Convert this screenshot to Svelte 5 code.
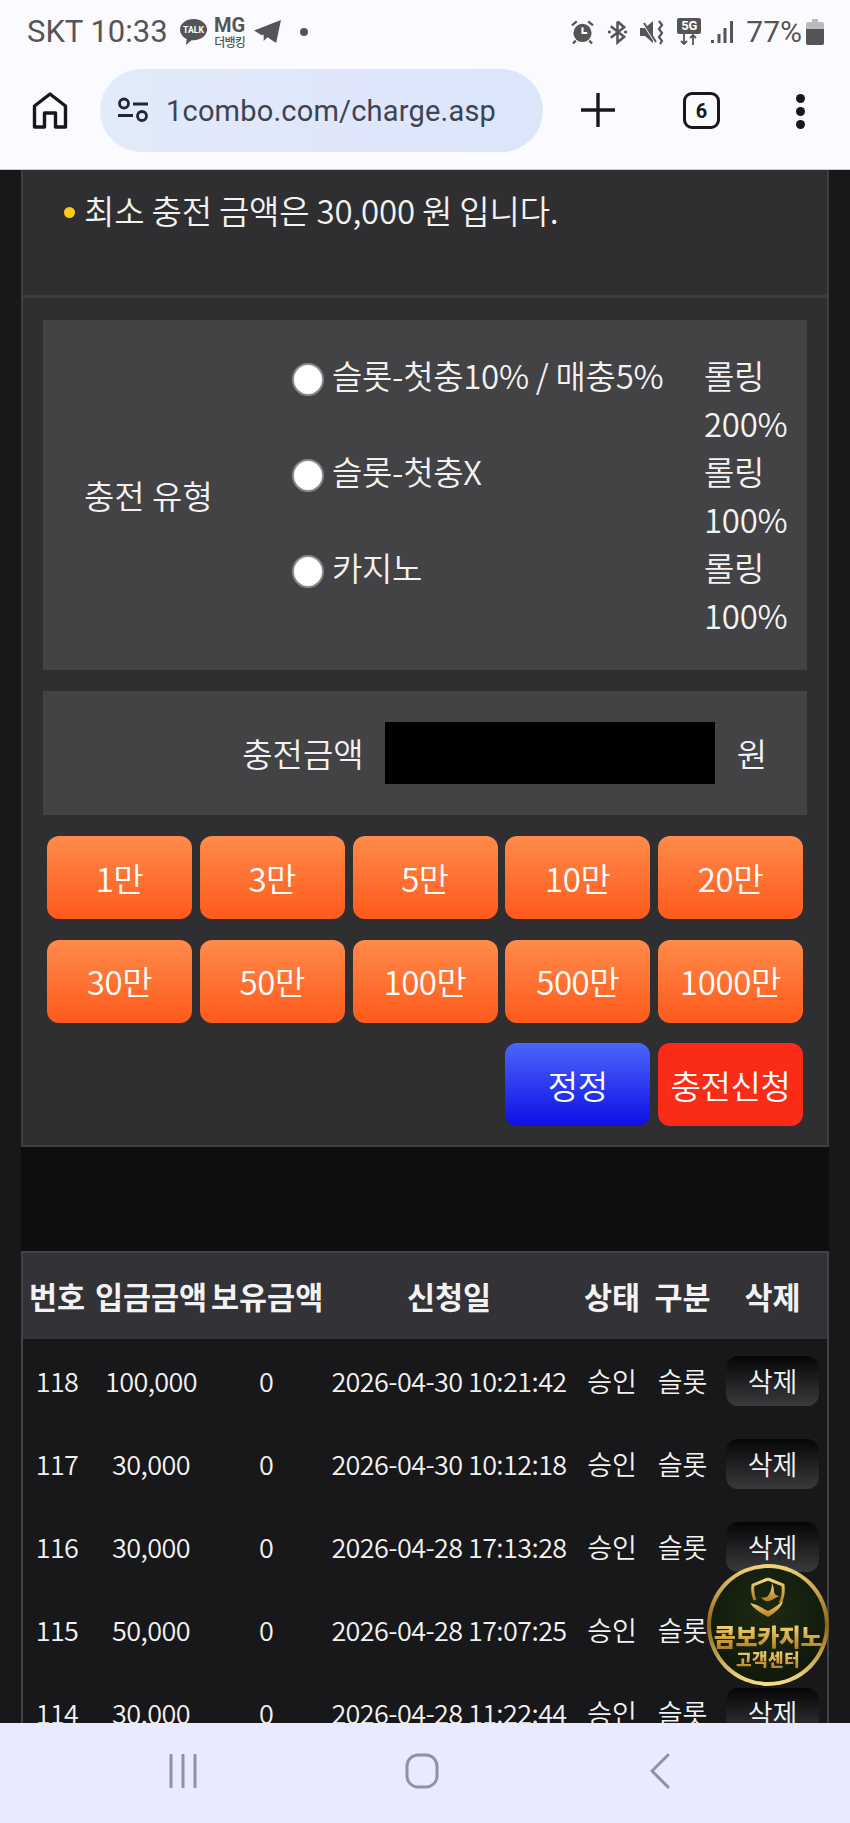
<script>
  const row1 = ['1만', '3만', '5만', '10만', '20만'];
  const row2 = ['30만', '50만', '100만', '500만', '1000만'];
  const types = [
    ['슬롯-첫충10% / 매충5%', '200%'],
    ['슬롯-첫충X', '100%'],
    ['카지노', '100%']
  ];
  const rows = [
    ['118', '100,000', '2026-04-30 10:21:42'],
    ['117', '30,000', '2026-04-30 10:12:18'],
    ['116', '30,000', '2026-04-28 17:13:28'],
    ['115', '50,000', '2026-04-28 17:07:25'],
    ['114', '30,000', '2026-04-28 11:22:44']
  ];
</script>

<div class="screen">
  <header class="status">
    <span class="st-time">SKT 10:33</span>
    <svg class="ic-talk" viewBox="0 0 30 30"><path d="M15 2C7 2 1 7 1 13c0 4 3 8 7 10l-1 6 6-5h2c8 0 14-5 14-11S23 2 15 2z" fill="#555"/><text x="15" y="17" text-anchor="middle" class="talk-t">TALK</text></svg>
    <span class="mg"><b>MG</b><small>더뱅킹</small></span>
    <svg class="ic-tg" viewBox="0 0 30 26"><path d="M1 12 29 1l-5 24-9-6-4 4v-7l-2 1z" fill="#555"/></svg>
    <span class="dot"></span>
    <span class="st-grow"></span>
    <svg class="ic-alarm" viewBox="0 0 24 26"><circle cx="12" cy="14" r="9.500" fill="#555"/><path d="M12 8v6h5" stroke="#fff" stroke-width="2.200" fill="none"/><path d="M1 6l5-4M23 6l-5-4M5 22l-3 3M19 22l3 3" stroke="#555" stroke-width="2.400"/></svg>
    <svg class="ic-bt" viewBox="0 0 22 26"><path d="M11 2v22l7-6L4 7M11 2l7 6L4 19M1 13h3M18 13h3" stroke="#555" stroke-width="2.600" fill="none"/></svg>
    <svg class="ic-mute" viewBox="0 0 24 26"><path d="M0 9h5l8-7v22l-8-7H0z" fill="#555"/><path d="M2 2l14 22" stroke="#fbfaff" stroke-width="2.400"/><path d="M4 4l12 19" stroke="#555" stroke-width="2"/><path d="M19 2l3 4-3 4 3 4-3 4 3 4-2 3" stroke="#555" stroke-width="2.200" fill="none"/></svg>
    <span class="five"><b>5G</b><svg viewBox="0 0 22 11"><path d="M6 0v10M3 7l3 3 3-3M15 11V1M12 4l3-3 3 3" stroke="#555" stroke-width="1.800" fill="none"/></svg></span>
    <svg class="ic-sig" viewBox="0 0 22 24"><path d="M0 20h3v3H0zM6.500 14h3v9h-3zM12.500 8h3v15h-3zM19 1h3v22h-3z" fill="#555"/></svg>
    <span class="pct">77%</span>
    <svg class="ic-bat" viewBox="0 0 18 26"><path d="M6 0h6v3h4a2 2 0 0 1 2 2v19a2 2 0 0 1-2 2H2a2 2 0 0 1-2-2V5a2 2 0 0 1 2-2h4z" fill="#bbb"/><path d="M0 10h18v14a2 2 0 0 1-2 2H2a2 2 0 0 1-2-2z" fill="#555"/></svg>
  </header>

  <div class="toolbar">
    <svg class="ic-home" viewBox="0 0 36 38"><path d="M2.500 36V15L18 3l15.500 12v21h-10V22h-11v14z" fill="none" stroke="#17181b" stroke-width="3.400" stroke-linejoin="round"/></svg>
    <div class="pill">
      <svg class="ic-tune" viewBox="0 0 32 28"><circle cx="7" cy="6.500" r="4.500" fill="none" stroke="#22262e" stroke-width="2.800"/><path d="M16 7h15M1 18.500h15" stroke="#22262e" stroke-width="2.800"/><circle cx="25" cy="19" r="4.500" fill="none" stroke="#22262e" stroke-width="2.800"/></svg>
      <span class="url">1combo.com/charge.asp</span>
    </div>
    <svg class="ic-plus" viewBox="0 0 34 34"><path d="M17 1v32M1 17h32" stroke="#17181b" stroke-width="3.400" stroke-linecap="round"/></svg>
    <span class="tabs">6</span>
    <span class="kebab"><i></i><i></i><i></i></span>
  </div>

  <main class="view">
    <div class="content">
      <section class="panel">
        <div class="notice">
          <span class="bullet"></span>
          <span>최소 충전 금액은 30,000 원 입니다.</span>
        </div>
        <div class="form">
          <div class="box typebox">
            <div class="type-label">충전 유형</div>
            <div class="type-list">
              {#each types as t}
                <div class="type-row">
                  <span class="radio"></span>
                  <span class="type-name">{t[0]}</span>
                  <span class="roll">롤링<br />{t[1]}</span>
                </div>
              {/each}
            </div>
          </div>
          <div class="box amount">
            <span class="am-label">충전금액</span>
            <span class="am-input"></span>
            <span class="am-unit">원</span>
          </div>
          <div class="btns">
            {#each row1 as b}<button class="btn orange">{b}</button>{/each}
            {#each row2 as b}<button class="btn orange">{b}</button>{/each}
            <button class="btn blue first">정정</button>
            <button class="btn red">충전신청</button>
          </div>
        </div>
      </section>

      <section class="list">
        <div class="tr head">
          <span>번호</span><span>입금금액</span><span>보유금액</span><span>신청일</span><span>상태</span><span>구분</span><span>삭제</span>
        </div>
        {#each rows as r}
          <div class="tr">
            <span class="num">{r[0]}</span><span class="num">{r[1]}</span><span class="num">0</span><span class="num">{r[2]}</span><span>승인</span><span>슬롯</span>
            <span><button class="del">삭제</button></span>
          </div>
        {/each}
      </section>
    </div>

    <div class="badge">
      <svg class="shield" viewBox="0 0 40 42">
        <defs><linearGradient id="gold" x1="0" y1="0" x2="0" y2="1"><stop offset="0" stop-color="#f4d77c"/><stop offset="1" stop-color="#b47c1e"/></linearGradient></defs>
        <path d="M20 2 35 8c1 8 0 13-3 18" fill="none" stroke="url(#gold)" stroke-width="3"/>
        <path d="M20 2 5 8c-1 7 0 11 2 15" fill="none" stroke="url(#gold)" stroke-width="3"/>
        <path d="M24 6c0 6-2 10-4 13-2 2-5 2-7 1 2 3 5 5 8 4 4-1 7-4 11-5-4 0-6-2-6-5 0-3-1-6-2-8z" fill="url(#gold)"/>
        <path d="M2 26c7 1 12 5 18 8 6-3 10-6 15-10-1 6-8 12-15 16C13 36 6 32 2 26z" fill="url(#gold)"/>
      </svg>
      <div class="b-main">콤보카지노</div>
      <div class="b-sub">고객센터</div>
    </div>
  </main>

  <nav class="navbar">
    <svg class="n1" viewBox="0 0 30 34"><path d="M3 1v32M15 1v32M27 1v32" stroke="#8e92a8" stroke-width="3" stroke-linecap="round"/></svg>
    <svg class="n2" viewBox="0 0 34 36"><rect x="2" y="2" width="30" height="32" rx="11" fill="none" stroke="#8e92a8" stroke-width="3"/></svg>
    <svg class="n3" viewBox="0 0 20 36"><path d="M18 2 2 18l16 16" fill="none" stroke="#8e92a8" stroke-width="3" stroke-linecap="round"/></svg>
  </nav>
</div>

<style>
  :global(body) { margin: 0; background: #18181b; }
  .screen {
    width: 850px; height: 1823px; overflow: hidden; display: flex; flex-direction: column;
    font-family: "Noto Sans CJK KR", "Noto Sans", sans-serif; color: #f2f2f2;
  }

  .status {
    height: 60px; flex: none; background: #fbfaff; display: flex; align-items: center;
    padding: 3px 26px 0 27px; box-sizing: border-box; color: #555;
  }
  .st-time { font: 400 31px Roboto, sans-serif; margin-right: 11px; white-space: nowrap; }
  .ic-talk { width: 29px; height: 29px; margin-right: 6px; flex: none; }
  .talk-t { font: 700 9px Roboto, sans-serif; fill: #fff; }
  .mg { display: flex; flex-direction: column; align-items: center; width: 32px; margin-right: 7px; flex: none; }
  .mg b { font: 700 20px/19px Roboto, sans-serif; }
  .mg small { font-size: 12px; font-weight: 500; line-height: 13px; letter-spacing: -0.7px; white-space: nowrap; }
  .ic-tg { width: 29px; height: 25px; margin-right: 18px; flex: none; }
  .dot { width: 8px; height: 8px; border-radius: 50%; background: #555; flex: none; }
  .st-grow { flex: 1; }
  .ic-alarm { width: 23px; height: 26px; margin-right: 13px; flex: none; }
  .ic-bt { width: 21px; height: 26px; margin-right: 12px; flex: none; }
  .ic-mute { width: 24px; height: 26px; margin-right: 13px; flex: none; }
  .five { width: 24px; display: flex; flex-direction: column; align-items: center; margin-right: 10px; flex: none; }
  .five b { font: 700 13px/16px Roboto, sans-serif; color: #fff; background: #555; border-radius: 2px; width: 24px; text-align: center; }
  .five svg { width: 22px; height: 11px; }
  .ic-sig { width: 22px; height: 24px; margin-right: 13px; flex: none; }
  .pct { font: 400 30px Roboto, sans-serif; margin-right: 4px; white-space: nowrap; }
  .ic-bat { width: 18px; height: 26px; flex: none; }

  .toolbar {
    height: 110px; flex: none; background: #fbfaff; display: flex; align-items: flex-start;
    box-sizing: border-box; border-bottom: 1px solid #c9ccd8;
  }
  .ic-home { width: 36px; height: 38px; margin: 31px 0 0 32px; flex: none; }
  .pill {
    margin: 9px 0 0 32px; width: 443px; height: 83px; border-radius: 42px; flex: none;
    background: linear-gradient(90deg, #e1ebf9, #dfe6fb 60%, #dbe6fb);
    display: flex; align-items: center; box-sizing: border-box; padding-left: 17px;
  }
  .ic-tune { width: 32px; height: 28px; margin-right: 17px; }
  .url { font: 400 29px Roboto, sans-serif; color: #3e4350; letter-spacing: 0.2px; white-space: nowrap; }
  .ic-plus { width: 34px; height: 34px; margin: 33px 0 0 38px; flex: none; }
  .tabs {
    width: 37px; height: 37px; box-sizing: border-box; border: 3.500px solid #17181b; border-radius: 9px;
    margin: 32px 0 0 68px; display: flex; align-items: center; justify-content: center;
    font: 700 20px Roboto, sans-serif; color: #17181b; flex: none;
  }
  .kebab { margin: 34px 0 0 76px; display: flex; flex-direction: column; gap: 4px; }
  .kebab i { width: 9px; height: 9px; border-radius: 50%; background: #17181b; display: block; }

  .view { flex: 1; min-height: 0; overflow: hidden; position: relative; padding: 0 21px; background: #18181b; }
  .content { background: #0e0d10; display: flow-root; }

  .panel {
    background: #2f2f31; border: solid #3f3f41; border-width: 0 2px 2px; box-sizing: border-box;
    height: 977px;
  }
  .notice {
    height: 128px; box-sizing: border-box; border-bottom: 3px solid #3e3e40; padding: 18px 0 0 41px;
    display: flex; align-items: flex-start; gap: 9px; font-size: 33px; font-weight: 350; line-height: 44px; letter-spacing: -0.2px;
  }
  .bullet { width: 11px; height: 11px; border-radius: 50%; background: #f9ca17; margin: 19px 0 0 0; flex: none; }
  .form { padding: 22px 20px 0; }
  .box { background: #434245; }
  .typebox { height: 350px; display: flex; align-items: center; box-sizing: border-box; padding-left: 41px; }
  .type-label { width: 208px; font-size: 33px; font-weight: 350; flex: none; }
  .type-list { display: flex; flex-direction: column; }
  .type-row { display: flex; height: 96px; align-items: flex-start; font-size: 33px; font-weight: 350; line-height: 48px; letter-spacing: -0.3px; }
  .radio { width: 32px; height: 33px; border-radius: 50%; background: #fff; border: 2px solid #8b8b8d; box-sizing: border-box; margin: 12px 8px 0 0; flex: none; }
  .type-name { width: 372px; flex: none; white-space: nowrap; }
  .roll { flex: none; }

  .amount { height: 124px; margin-top: 21px; display: flex; align-items: center; justify-content: flex-end; font-size: 33px; font-weight: 350; box-sizing: border-box; padding: 0 40px 1px 0; }
  .am-input { width: 330px; height: 62px; background: #000; margin: 0 22px 0 21px; }
  .btns { display: grid; grid-template-columns: repeat(5, 145px); gap: 20.500px 7.750px; margin: 21px 0 0 4px; }
  .btn {
    height: 83px; border: 0; border-radius: 12px; color: #fff; font: 350 33px "Noto Sans CJK KR", sans-serif; padding: 0; letter-spacing: -0.4px;
  }
  .orange { background: linear-gradient(180deg, #fe8b4a, #fe5a1c); }
  .blue { background: linear-gradient(180deg, #4a66fa, #0f0fe6); }
  .first { grid-column: 4; }
  .red { background: #fa2c18; }

  .list { margin-top: 104px; background: #18171a; border-left: 2px solid #434345; border-right: 2px solid #434345; border-top: 2px solid #434345; }
  .tr {
    display: grid; grid-template-columns: 68px 120px 110px 256px 70px 71px 1fr;
    height: 83px; align-items: center; text-align: center; font-size: 27px; font-weight: 350;
  }
  .tr > span { white-space: nowrap; }
  .tr > .num { letter-spacing: -0.6px; }
  .head { height: 86px; background: #333236; font-size: 30.500px; font-weight: 700; }
  .del {
    width: 93px; height: 50px; border: 0; border-radius: 12px; color: #f2f2f2;
    background: linear-gradient(180deg, #060607, #3a3a3d); font: 350 27px "Noto Sans CJK KR", sans-serif; padding: 0;
  }

  .badge {
    position: absolute; left: 707px; top: 1394px; width: 122px; height: 122px; box-sizing: border-box;
    border-radius: 50%; border: 4px solid transparent;
    background: radial-gradient(circle at 50% 40%, #1d2a12, #0c140a) padding-box, linear-gradient(180deg, #f3d67a, #8f6418 50%, #f8e08a) border-box;
    display: flex; flex-direction: column; align-items: center;
  }
  .shield { width: 40px; height: 42px; margin-top: 9px; flex: none; }
  .b-main {
    margin-top: 4px; font-size: 24px; font-weight: 900; line-height: 26px; white-space: nowrap; letter-spacing: -0.400px;
    background: linear-gradient(180deg, #f6dc7d, #b57d1d); -webkit-background-clip: text; background-clip: text; color: transparent;
  }
  .b-sub {
    font-size: 17px; font-weight: 900; line-height: 20px; white-space: nowrap; letter-spacing: 0.400px;
    background: linear-gradient(180deg, #f6dc7d, #b57d1d); -webkit-background-clip: text; background-clip: text; color: transparent;
  }

  .navbar { height: 100px; flex: none; background: #e9eafd; display: flex; align-items: flex-start; }
  .n1 { width: 30px; height: 34px; margin: 31px 0 0 168px; flex: none; }
  .n2 { width: 34px; height: 36px; margin: 30px 0 0 207px; flex: none; }
  .n3 { width: 20px; height: 36px; margin: 30px 0 0 211px; flex: none; }
</style>
